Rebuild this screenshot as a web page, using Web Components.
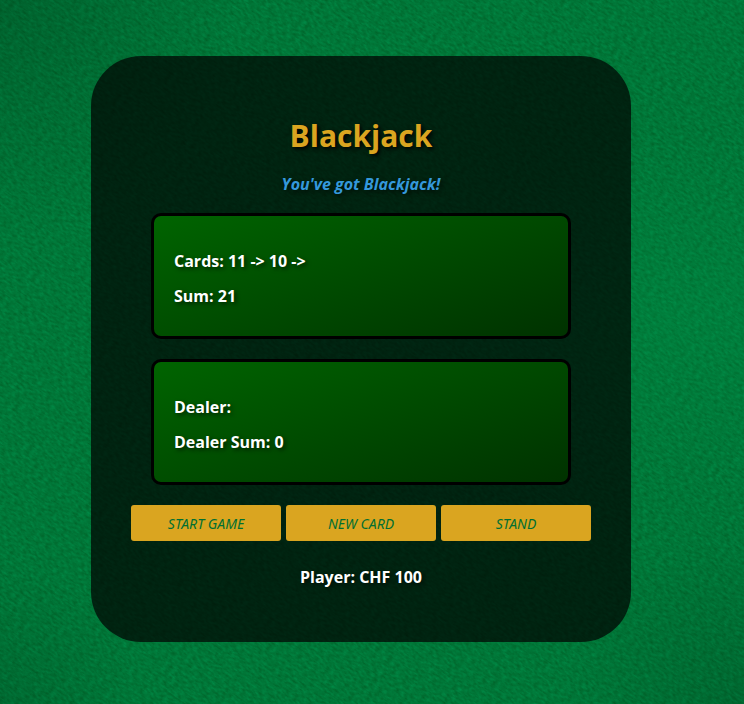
<!DOCTYPE html>
<html lang="en">
<head>
<meta charset="utf-8">
<meta name="viewport" content="width=device-width, initial-scale=1">
<title>Blackjack</title>
<style>
html { height: 100%; }
body { margin: 0; min-height: 100%; background: #007838; font-family: "Trebuchet MS", "Open Sans", sans-serif; }
</style>
</head>
<body>
<felt-table>
  <game-panel>
    <span slot="title">Blackjack</span>
    <span slot="status">You've got Blackjack!</span>
    <hand-box><span slot="cards">Cards: 11 -&gt; 10 -&gt;</span><span slot="sum">Sum: 21</span></hand-box>
    <hand-box><span slot="cards">Dealer:</span><span slot="sum">Dealer Sum: 0</span></hand-box>
    <game-button slot="actions">START GAME</game-button>
    <game-button slot="actions">NEW CARD</game-button>
    <game-button slot="actions">STAND</game-button>
    <span slot="player">Player: CHF 100</span>
  </game-panel>
</felt-table>
<script>
function define(name, html) {
  const template = document.createElement('template');
  template.innerHTML = html;
  customElements.define(name, class extends HTMLElement {
    constructor() {
      super();
      this.attachShadow({ mode: 'open' }).append(template.content.cloneNode(true));
    }
  });
}

// Woven felt: diagonal fine fibres, plus broad soft light and dark patches.
const felt = `<svg xmlns="http://www.w3.org/2000/svg" width="1600" height="1200">
<filter id="f" x="0" y="0" width="100%" height="100%" color-interpolation-filters="sRGB">
<feTurbulence type="fractalNoise" baseFrequency="0.2 0.44" numOctaves="3" seed="8"/>
<feColorMatrix values="0 0 0 0 0  .2 0 0 0 .364  .15 0 0 0 .143  0 0 0 0 1"/></filter>
<g transform="rotate(35)"><rect x="-200" y="-1000" width="2600" height="2400" filter="url(#f)"/></g></svg>`;

define('felt-table', `<style>
  :host {
    display: grid; box-sizing: border-box; min-height: 100vh;
    padding: 56px 22px 56px 0; justify-items: center; align-items: start;
    background:
      radial-gradient(circle at 0 0, rgba(0,35,15,.24), transparent 240px),
      radial-gradient(circle at 100% 100%, rgba(0,35,15,.18), transparent 180px),
      radial-gradient(circle at 0 100%, rgba(0,35,15,.16), transparent 140px),
      radial-gradient(ellipse at 92% 45%, rgba(0,160,80,.2), transparent 320px),
      url('data:image/svg+xml,${encodeURIComponent(felt)}');
  }
</style><slot></slot>`);

define('game-panel', `<style>
  :host {
    display: flex; flex-direction: column; box-sizing: border-box;
    width: 100%; max-width: 540px; padding: 56px 40px 55px;
    border-radius: 50px; background: rgba(0,0,0,.7); color: white;
    text-align: center; text-shadow: 2px 2px 4px rgba(0,0,0,.6);
  }
  h1 { margin: 0; font-size: 30px; line-height: 48px; font-weight: 700; color: goldenrod; text-shadow: 2px 2px 4px black; }
  p { margin: 0; font-size: 16px; line-height: 20px; font-weight: 700; }
  .status { margin: 14px 0 19px; font-style: italic; color: #3498db; }
  .hands { display: grid; gap: 20px; padding: 0 20px; }
  .actions { display: flex; gap: 5px; margin: 20px 0 26px; }
</style>
<h1><slot name="title"></slot></h1>
<p class="status"><slot name="status"></slot></p>
<div class="hands"><slot></slot></div>
<div class="actions"><slot name="actions"></slot></div>
<p><slot name="player"></slot></p>`);

define('hand-box', `<style>
  :host {
    display: grid; gap: 15px; padding: 35px 20px 30px; text-align: left;
    border: 3px solid black; border-radius: 10px;
    background: linear-gradient(160deg, #006400, #003200);
  }
  p { margin: 0; font-size: 16px; line-height: 20px; font-weight: 700; }
</style><p><slot name="cards"></slot></p><p><slot name="sum"></slot></p>`);

define('game-button', `<style>
  :host { display: flex; flex: 1; }
  button {
    flex: 1; height: 36px; padding: 0; border: 0; border-radius: 3px;
    background: goldenrod; color: #016f32; cursor: pointer;
    font: italic 14px "Noto Sans", sans-serif;
  }
</style><button type="button"><slot></slot></button>`);
</script>
</body>
</html>
